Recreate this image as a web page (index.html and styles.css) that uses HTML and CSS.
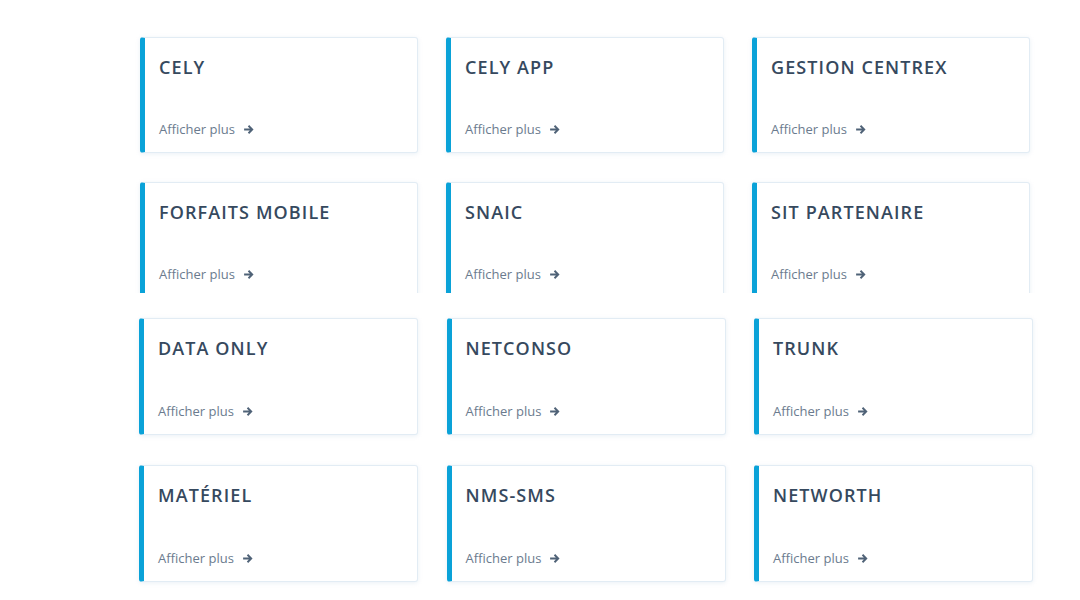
FILE: index.html
```html
<!DOCTYPE html>
<html lang="fr">
<head>
<meta charset="UTF-8" />
<meta name="viewport" content="width=device-width, initial-scale=1" />
<title>Produits</title>
<link rel="stylesheet" href="styles.css">
</head>
<body>

<section class="block block-top">
  <div class="grid grid-top">
    <a class="card" href="#"><h2>CELY</h2><span class="more">Afficher plus <svg class="arrow" viewBox="0 0 10 10"><path d="M1 5h7.5M5 1.6L8.4 5 5 8.4"/></svg></span></a>
    <a class="card" href="#"><h2>CELY APP</h2><span class="more">Afficher plus <svg class="arrow" viewBox="0 0 10 10"><path d="M1 5h7.5M5 1.6L8.4 5 5 8.4"/></svg></span></a>
    <a class="card" href="#"><h2>GESTION CENTREX</h2><span class="more">Afficher plus <svg class="arrow" viewBox="0 0 10 10"><path d="M1 5h7.5M5 1.6L8.4 5 5 8.4"/></svg></span></a>
    <a class="card" href="#"><h2>FORFAITS MOBILE</h2><span class="more">Afficher plus <svg class="arrow" viewBox="0 0 10 10"><path d="M1 5h7.5M5 1.6L8.4 5 5 8.4"/></svg></span></a>
    <a class="card" href="#"><h2>SNAIC</h2><span class="more">Afficher plus <svg class="arrow" viewBox="0 0 10 10"><path d="M1 5h7.5M5 1.6L8.4 5 5 8.4"/></svg></span></a>
    <a class="card" href="#"><h2>SIT PARTENAIRE</h2><span class="more">Afficher plus <svg class="arrow" viewBox="0 0 10 10"><path d="M1 5h7.5M5 1.6L8.4 5 5 8.4"/></svg></span></a>
  </div>
</section>

<section class="block block-bottom">
  <div class="grid grid-bottom">
    <a class="card" href="#"><h2>DATA ONLY</h2><span class="more">Afficher plus <svg class="arrow" viewBox="0 0 10 10"><path d="M1 5h7.5M5 1.6L8.4 5 5 8.4"/></svg></span></a>
    <a class="card" href="#"><h2>NETCONSO</h2><span class="more">Afficher plus <svg class="arrow" viewBox="0 0 10 10"><path d="M1 5h7.5M5 1.6L8.4 5 5 8.4"/></svg></span></a>
    <a class="card" href="#"><h2>TRUNK</h2><span class="more">Afficher plus <svg class="arrow" viewBox="0 0 10 10"><path d="M1 5h7.5M5 1.6L8.4 5 5 8.4"/></svg></span></a>
    <a class="card" href="#"><h2>MATÉRIEL</h2><span class="more">Afficher plus <svg class="arrow" viewBox="0 0 10 10"><path d="M1 5h7.5M5 1.6L8.4 5 5 8.4"/></svg></span></a>
    <a class="card" href="#"><h2>NMS-SMS</h2><span class="more">Afficher plus <svg class="arrow" viewBox="0 0 10 10"><path d="M1 5h7.5M5 1.6L8.4 5 5 8.4"/></svg></span></a>
    <a class="card" href="#"><h2>NETWORTH</h2><span class="more">Afficher plus <svg class="arrow" viewBox="0 0 10 10"><path d="M1 5h7.5M5 1.6L8.4 5 5 8.4"/></svg></span></a>
  </div>
</section>

</body>
</html>
```

FILE: styles.css
```css
body {
  margin: 0;
  background: #fff;
  font-family: "Open Sans", "Noto Sans", sans-serif;
  width: 1080px;
  height: 600px;
  overflow: hidden;
}
.block {
  overflow: hidden;
}
.block-top {
  height: 293px;
  padding: 37px 0 0 140px;
  box-sizing: border-box;
}
.block-bottom {
  height: 307px;
  padding: 25px 0 0 139px;
  box-sizing: border-box;
}
.grid {
  display: grid;
}
.grid-top {
  grid-template-columns: repeat(3, 278px);
  column-gap: 28px;
  row-gap: 29px;
}
.grid-bottom {
  grid-template-columns: repeat(3, 279px);
  column-gap: 28.5px;
  row-gap: 30px;
}
.card {
  display: flex;
  flex-direction: column;
  justify-content: space-between;
  height: 116px;
  box-sizing: border-box;
  padding: 17px 14px 15px 14px;
  background: #fff;
  border: 1px solid #e2ecf4;
  border-left: 5px solid #0aa2d8;
  border-radius: 3px;
  box-shadow: 0 1px 4px rgba(170, 195, 220, 0.25);
  text-decoration: none;
}
.grid-bottom .card {
  height: 117px;
}
.card h2 {
  margin: 0;
  font-size: 18px;
  font-weight: 600;
  letter-spacing: 1.1px;
  color: #36495e;
  line-height: 24px;
}
.more {
  display: flex;
  align-items: center;
  font-size: 13px;
  color: #6b7b8e;
  line-height: 16px;
}
.arrow {
  width: 11px;
  height: 11px;
  margin-left: 8px;
  fill: none;
  stroke: #4f6277;
  stroke-width: 1.7;
}
```
